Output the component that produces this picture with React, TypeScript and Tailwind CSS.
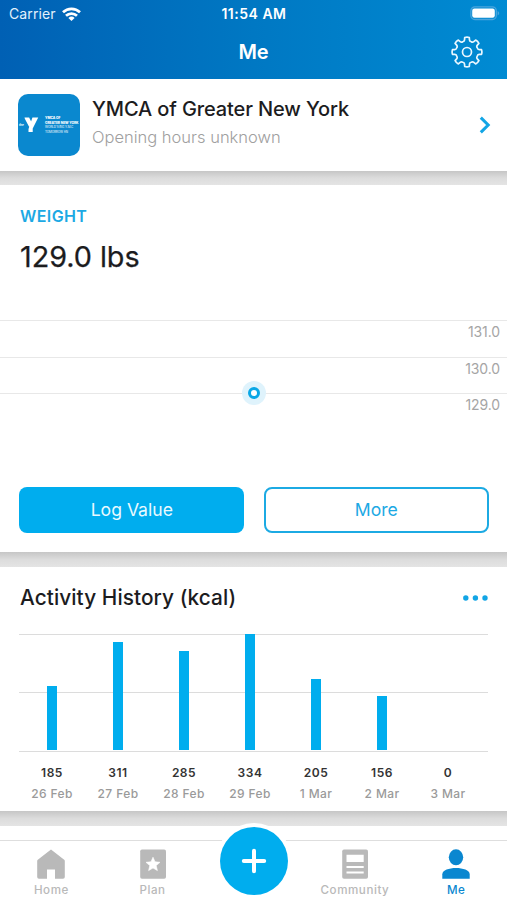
import React from 'react';

const days = [
  { value: 185, label: '26 Feb' },
  { value: 311, label: '27 Feb' },
  { value: 285, label: '28 Feb' },
  { value: 334, label: '29 Feb' },
  { value: 205, label: '1 Mar' },
  { value: 156, label: '2 Mar' },
  { value: 0, label: '3 Mar' },
];
const peak = 334;

function WifiIcon() {
  return (
    <svg className="ml-[6px] h-[14px] w-[19px]" viewBox="0 0 19 14" fill="none" stroke="white" strokeWidth="2.7">
      <path d="M1 5.3a12.2 12.2 0 0 1 17 0" />
      <path d="M4 8.8a7.9 7.9 0 0 1 11 0" />
      <path d="M9.5 13.9L6.4 11a4.5 4.5 0 0 1 6.2 0z" fill="white" stroke="none" />
    </svg>
  );
}

function BatteryIcon() {
  return (
    <svg className="h-[15px] w-[31px]" viewBox="0 0 31 15">
      <rect x="1.9" y="0.9" width="25.4" height="12.6" rx="4" fill="none" stroke="#4aa5dd" strokeWidth="1.3" />
      <rect x="3.2" y="2.6" width="22.6" height="9.2" rx="2.2" fill="white" />
      <path d="M28.6 5c2.1.8 2.1 3.6 0 4.4z" fill="#4aa5dd" />
    </svg>
  );
}

function gearOutline() {
  const at = (radius: number, degrees: number) => {
    const a = (degrees * Math.PI) / 180;
    return `${(16 + radius * Math.sin(a)).toFixed(2)} ${(16 - radius * Math.cos(a)).toFixed(2)}`;
  };
  let d = `M${at(14.7, -9)}`;
  for (let i = 0; i < 8; i++) {
    const t = i * 45;
    d += `Q${at(15.3, t)} ${at(14.7, t + 9)}L${at(12.4, t + 11.5)}Q${at(10.8, t + 14)} ${at(11.1, t + 22.5)}`;
    d += `Q${at(10.8, t + 31)} ${at(12.4, t + 33.5)}L${at(14.7, t + 36)}`;
  }
  return d + 'Z';
}

function GearIcon() {
  return (
    <svg className="h-8 w-8" viewBox="0 0 32 32" fill="none" stroke="#e8f6ff" strokeWidth="1.7" strokeLinejoin="round">
      <path d={gearOutline()} />
      <circle cx="16" cy="16" r="4.5" />
    </svg>
  );
}

function BranchLogo() {
  return (
    <div className="relative h-[62px] w-[62px] shrink-0 overflow-hidden rounded-[10px] bg-[#0a88cf] text-white">
      <svg className="absolute left-[6px] top-[22px] h-[18px] w-[15px]" viewBox="0 0 16 18">
        <path d="M0.5 1h5l3 6-2.8 4.4L1 2.5z" fill="white" />
        <path d="M9 1h6.2L9.3 12.6V16.4H4.8V13.2z" fill="white" />
      </svg>
      <span className="absolute left-px top-[29px] text-[3px] font-bold leading-[5px]">the</span>
      <div className="absolute left-[27px] top-[22px] whitespace-nowrap text-[3.3px] leading-[4.6px] tracking-[-0.05px]">
        <div className="font-extrabold">YMCA OF</div>
        <div className="font-extrabold">GREATER NEW YORK</div>
        <div className="text-[3px]">WORLD'S BIG Y.M.C</div>
        <div className="text-[3px]">TOMORROW AN</div>
      </div>
    </div>
  );
}

function Gap({ className }: { className: string }) {
  return <div className={`shrink-0 bg-gradient-to-b from-[#c6c6c6] via-[#dcdcdc] to-[#e4e4e4] ${className}`} />;
}

function Tab({ label, tone, children }: { label: string; tone: string; children: React.ReactNode }) {
  return (
    <div className={`flex w-[101.2px] flex-col items-center pt-[8px] ${tone}`}>
      <svg className="h-[30px] w-[30px]" viewBox="0 0 30 30" fill="currentColor">
        {children}
      </svg>
      <span className="mt-[4px] text-[11.6px] font-medium leading-[14px] tracking-[0.55px]">{label}</span>
    </div>
  );
}

export default function App() {
  return (
    <div className="relative flex h-[900px] w-[507px] flex-col overflow-hidden bg-white font-['Inter',sans-serif] text-[#1c1c1e]">
      <header className="h-[79px] shrink-0 bg-gradient-to-r from-[#0060b4] via-[#0078c3] to-[#008bd3] text-white">
        <div className="grid h-[27px] grid-cols-3 items-center pl-[9px] pr-[7px]">
          <div className="flex items-center">
            <span className="text-[14px] tracking-[0.1px] text-[#e3f1fc]">Carrier</span>
            <WifiIcon />
          </div>
          <span className="pr-px text-center text-[14px] font-semibold tracking-[0.5px]">11:54 AM</span>
          <div className="flex justify-end">
            <BatteryIcon />
          </div>
        </div>
        <div className="grid h-[50px] grid-cols-3 items-center">
          <span />
          <span className="text-center text-[20px] font-semibold tracking-[-0.1px]">Me</span>
          <span className="flex justify-end pr-[24px]">
            <GearIcon />
          </span>
        </div>
      </header>

      <section className="flex h-[92px] shrink-0 items-center pl-[18px] pr-[17px]">
        <BranchLogo />
        <div className="-mt-[5px] ml-[12px] flex-1">
          <h2 className="text-[20px] font-medium leading-[26px] tracking-[-0.12px]">YMCA of Greater New York</h2>
          <p className="mt-[3px] text-[16.5px] font-light leading-[24px] text-[#a0a0a0]">Opening hours unknown</p>
        </div>
        <svg className="-mr-px h-[20px] w-[12px]" viewBox="0 0 12 20" fill="none" stroke="#12a5e5" strokeWidth="3">
          <path d="M1.8 2.6L9.2 10L1.8 17.4" />
        </svg>
      </section>
      <Gap className="h-[14px]" />

      <section className="flex h-[367px] shrink-0 flex-col">
        <div className="h-[135px] px-[20px] pt-[21px]">
          <h3 className="text-[16px] font-semibold leading-[20px] tracking-[0.4px] text-[#1ca9e4]">WEIGHT</h3>
          <p className="mt-[12px] text-[28.8px] leading-[38px] tracking-[-0.05px] [-webkit-text-stroke:0.25px_#1c1c1e]">129.0 lbs</p>
        </div>
        <div className="relative h-[166px] text-right text-[14px] leading-[22px] tracking-[-0.1px] text-[#a5a5a5]">
          <div className="h-[36.5px] border-t-[1.5px] border-[#e8e8e8] pr-[7px]">131.0</div>
          <div className="h-[36.5px] border-t-[1.5px] border-[#e8e8e8] pr-[7px]">130.0</div>
          <div className="h-[36.5px] border-t-[1.5px] border-[#e8e8e8] pr-[7px]">129.0</div>
          <div className="absolute left-[242px] top-[61px] flex h-6 w-6 items-center justify-center rounded-full bg-[#dff3fc]">
            <div className="h-[12px] w-[12px] rounded-full border-[3.5px] border-[#0aa7e6] bg-white" />
          </div>
        </div>
        <div className="mt-[0.6px] flex h-[46px] justify-between pl-[19.3px] pr-[18.2px] text-[17.6px]">
          <button className="w-[225px] rounded-[8px] bg-[#00adee] pt-px text-[#e9f9ff]">Log Value</button>
          <button className="w-[225px] rounded-[8px] border-2 border-[#1caae3] pt-px text-[#1ca9e4]">More</button>
        </div>
      </section>
      <Gap className="h-[15px]" />

      <section className="h-[244px] shrink-0 px-[19px] pt-[17px]">
        <div className="flex h-[28px] items-center justify-between pl-px">
          <h2 className="text-[20.8px] font-medium tracking-[0.08px]">Activity History (kcal)</h2>
          <svg className="h-[6px] w-[26px]" viewBox="0 0 26 6" fill="#12a5e5">
            <circle cx="3.8" cy="3" r="2.7" />
            <circle cx="13.4" cy="3" r="2.7" />
            <circle cx="23" cy="3" r="2.7" />
          </svg>
        </div>
        <div className="mt-[22px] grid h-[118px]">
          <div className="col-start-1 row-start-1 flex flex-col">
            <div className="h-[57.5px] border-t-[1.5px] border-[#dcdcdc]" />
            <div className="flex-1 border-y-[1.5px] border-[#dcdcdc]" />
          </div>
          <div className="z-10 col-start-1 row-start-1 flex h-[116px] items-end pl-[0.2px]">
            {days.map((day) => (
              <div key={day.label} className="flex w-[66px] shrink-0 justify-center">
                <div className="w-[10px] bg-[#00adee]" style={{ height: (day.value / peak) * 116 }} />
              </div>
            ))}
          </div>
        </div>
        <div className="mt-[12px] flex">
          {days.map((day) => (
            <div key={day.label} className="flex w-[66px] flex-col items-center">
              <span className="text-[12px] font-semibold leading-[18px] tracking-[0.5px] text-[#333]">{day.value}</span>
              <span className="mt-[3px] text-[12px] font-medium leading-[18px] tracking-[0.4px] text-[#9a9a9a]">{day.label}</span>
            </div>
          ))}
        </div>
      </section>
      <Gap className="h-[15px]" />
      <div className="h-[14px] shrink-0" />

      <nav className="relative flex h-[60px] shrink-0 border-t border-[#dedede] bg-white pl-[0.8px]">
        <Tab label="Home" tone="text-[#b9b9b9]">
          <path d="M15 .5L28.2 10.7q.6.5.6 1.2V28a1.8 1.8 0 0 1-1.8 1.8H19V20.5H11V29.8H3A1.8 1.8 0 0 1 1.2 28V11.9q0-.7.6-1.2z" />
        </Tab>
        <Tab label="Plan" tone="text-[#b9b9b9]">
          <rect x="2.2" y="0.5" width="25.8" height="29.3" rx="1.8" />
          <path d="M15 8.2l2 4.6 5 .5-3.8 3.3 1.2 5L15 19l-4.4 2.6 1.2-5L8 13.3l5-.5z" fill="white" stroke="white" strokeWidth="0.6" strokeLinejoin="round" />
        </Tab>
        <div className="w-[101.2px]" />
        <Tab label="Community" tone="text-[#b9b9b9]">
          <rect x="2.2" y="0.5" width="25.8" height="29.3" rx="1.8" />
          <path d="M6.5 5.7h17.2v7.2H6.5zM6.5 17h17.2v2H6.5zM6.5 22.5h17.2v2H6.5z" fill="white" />
        </Tab>
        <Tab label="Me" tone="text-[#0a87d0]">
          <ellipse cx="15" cy="8.3" rx="7.2" ry="8" />
          <path d="M1.3 29.8V25.3c0-8.4 27.4-8.4 27.4 0v4.5z" />
        </Tab>
        <div className="absolute left-[216px] top-[-18px] flex h-[76px] w-[76px] items-center justify-center rounded-full bg-white">
          <div className="flex h-[68px] w-[68px] items-center justify-center rounded-full bg-[#00adee]">
            <svg className="h-[26px] w-[26px]" viewBox="0 0 26 26" stroke="white" strokeWidth="4" strokeLinecap="round">
              <path d="M13 2.8V23.2M2.8 13H23.2" />
            </svg>
          </div>
        </div>
      </nav>
    </div>
  );
}
